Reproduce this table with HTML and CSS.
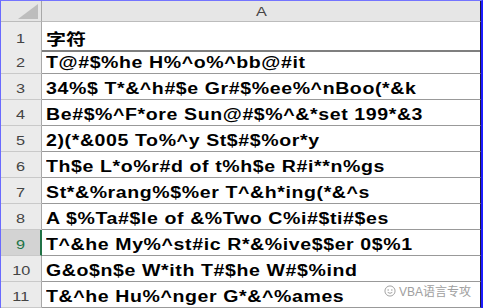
FILE: index.html
```html
<!DOCTYPE html>
<html lang="zh">
<head>
  <meta charset="UTF-8" />
  <title>Sheet</title>
  <link rel="stylesheet" href="styles.css">
</head>
<body>
  <div class="sheet">
    <div class="row head">
      <div class="num corner">
        <svg width="20" height="15" viewBox="0 0 20 15"><polygon points="20,0 20,15 0,15" fill="#bdbdbd"/></svg>
      </div>
      <div class="cell colhead"><span class="t">A</span></div>
    </div>
    <div class="row first"><div class="num"><span class="t">1</span></div><div class="cell"><span class="t cn">字符</span></div></div>
    <div class="row"><div class="num"><span class="t">2</span></div><div class="cell"><span class="t">T@#$%he H%^o%^bb@#it</span></div></div>
    <div class="row"><div class="num"><span class="t">3</span></div><div class="cell"><span class="t">34%$ T*&amp;^h#$e Gr#$%ee%^nBoo(*&amp;k</span></div></div>
    <div class="row"><div class="num"><span class="t">4</span></div><div class="cell"><span class="t">Be#$%^F*ore Sun@#$%^&amp;*set 199*&amp;3</span></div></div>
    <div class="row"><div class="num"><span class="t">5</span></div><div class="cell"><span class="t">2)(*&amp;005 To%^y St$#$%or*y</span></div></div>
    <div class="row"><div class="num"><span class="t">6</span></div><div class="cell"><span class="t">Th$e L*o%r#d of t%h$e R#i**n%gs</span></div></div>
    <div class="row"><div class="num"><span class="t">7</span></div><div class="cell"><span class="t">St*&amp;%rang%$%er T^&amp;h*ing(*&amp;^s</span></div></div>
    <div class="row"><div class="num"><span class="t">8</span></div><div class="cell"><span class="t">A $%Ta#$le of &amp;%Two C%i#$ti#$es</span></div></div>
    <div class="row sel"><div class="num"><span class="t">9</span></div><div class="cell"><span class="t">T^&amp;he My%^st#ic R*&amp;%ive$$er 0$%1</span></div></div>
    <div class="row"><div class="num"><span class="t">10</span></div><div class="cell"><span class="t">G&amp;o$n$e W*ith T#$he W#$%ind</span></div></div>
    <div class="row"><div class="num"><span class="t">11</span></div><div class="cell"><span class="t">T&amp;^he Hu%^nger G*&amp;^%ames</span></div></div>
  </div>

  <div class="mark">
    <svg width="12" height="12" viewBox="0 0 13 13"><circle cx="6.5" cy="6.5" r="5.5" fill="none" stroke="#9a9a9a" stroke-width="1"/><circle cx="4.5" cy="5.5" r="0.8" fill="#9a9a9a"/><circle cx="8.5" cy="5.5" r="0.8" fill="#9a9a9a"/><path d="M4 8 Q6.5 10 9 8" fill="none" stroke="#9a9a9a" stroke-width="1"/></svg>
    <span>VBA语言专攻</span>
  </div>
</body>
</html>
```

FILE: styles.css
```css
body {
  margin: 0;
  width: 483px;
  height: 308px;
  overflow: hidden;
  background: #fff;
  position: relative;
  font-family: "Liberation Sans", "Noto Sans CJK SC", sans-serif;
}
.sheet {
  box-sizing: border-box;
  width: 483px;
  border-top: 1px solid #7474ff;
  border-left: 1px solid #6a6aff;
  border-right: 2px solid #1c1cff;
}
.row {
  display: grid;
  grid-template-columns: 41px 1fr;
  height: 26px;
}
.t {
  display: inline-block;
  transform: scaleX(1.25);
}
.num {
  background: #ebebeb;
  border-right: 1px solid #a8a8a8;
  border-bottom: 1px solid #c9c9c9;
  display: flex;
  align-items: center;
  justify-content: center;
  padding-top: 4px;
  box-sizing: border-box;
  font-size: 13px;
  color: #444;
}
.cell {
  border-bottom: 1px solid #999;
  border-right: 1px solid #1a1a40;
  display: flex;
  align-items: center;
  padding: 4px 0 0 4px;
  box-sizing: border-box;
  font-size: 16px;
  font-weight: bold;
  color: #000;
  white-space: nowrap;
}
.cell .t {
  letter-spacing: 0.5px;
  transform: scaleX(1.22);
  transform-origin: left center;
}
.cell .cn { letter-spacing: 0; transform: scaleX(1.25); }
.head { height: 21px; }
.head .num, .head .cell {
  background: #e6e6e6;
  border-bottom: 1px solid #bcbcbc;
  padding: 0;
}
.corner { align-items: flex-end; justify-content: flex-end; }
.corner svg { margin: 0 3px 2px 0; }
.colhead {
  justify-content: center;
  font-size: 13px;
  font-weight: normal;
  color: #444;
}
.colhead .t { letter-spacing: 0; transform: scaleX(1.25); transform-origin: center; }
.first .cell { border-bottom: 2px solid #7f7f7f; }
.first .num { border-bottom: 2px solid #c9c9c9; }
.sel .num {
  background: #d3d3d3;
  color: #217346;
  border-right: 2px solid #217346;
}
.mark {
  position: absolute;
  left: 384px;
  top: 282px;
  display: flex;
  align-items: center;
  gap: 3px;
  font-size: 12px;
  color: #a0a0a0;
  text-shadow: 0 0 2px #fff, 0 0 2px #fff;
}
```
